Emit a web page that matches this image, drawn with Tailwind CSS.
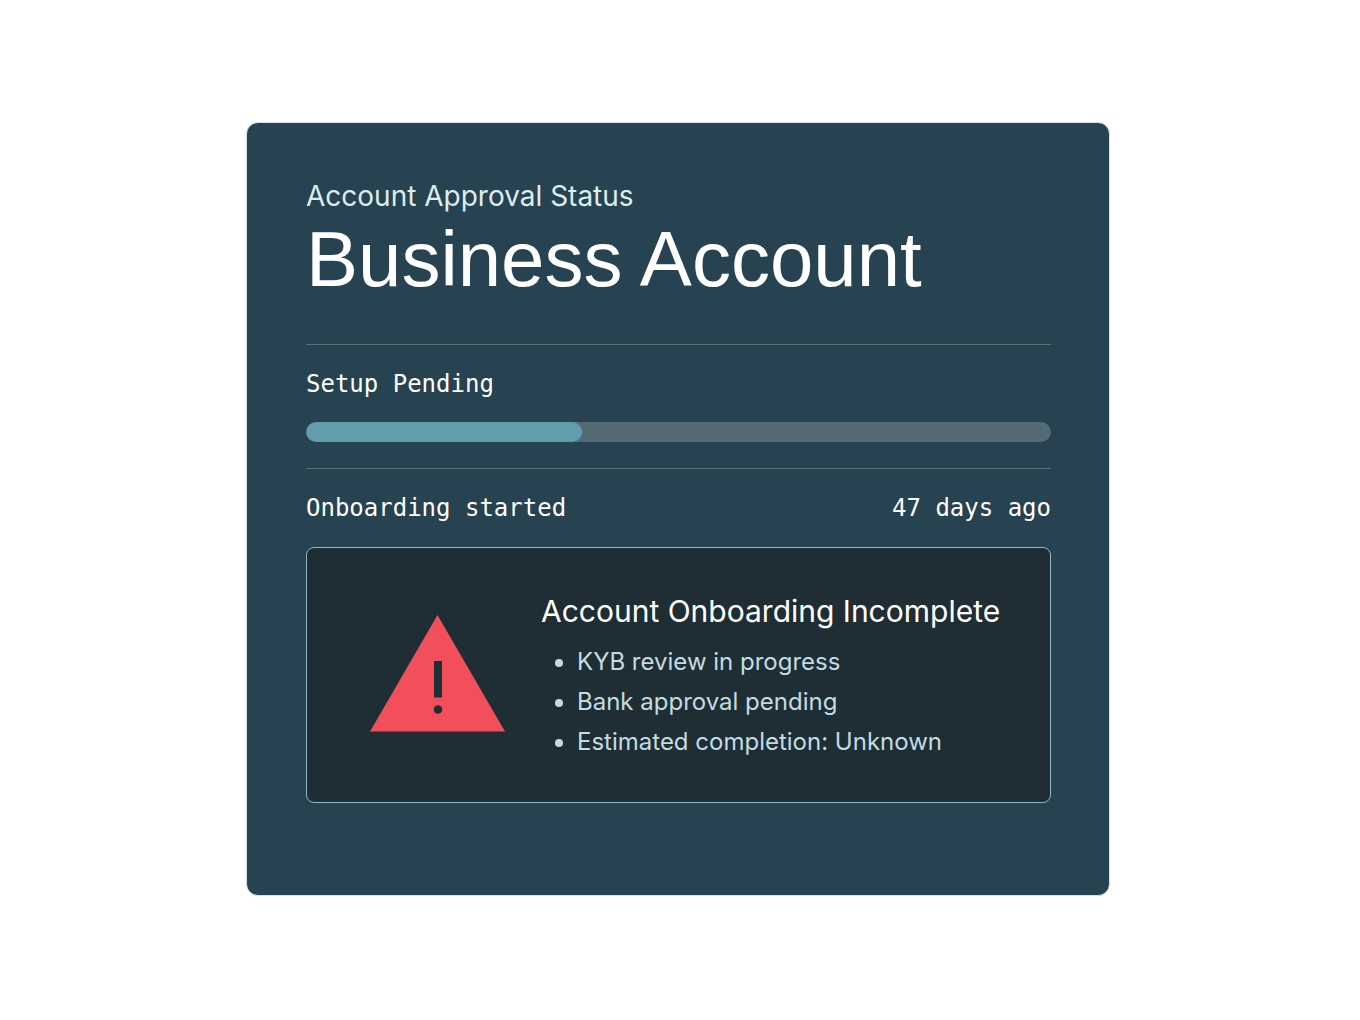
<!DOCTYPE html>
<html lang="en">
<head>
<meta charset="utf-8">
<meta name="viewport" content="width=device-width, initial-scale=1">
<title>Account Approval Status</title>
<script src="https://cdn.jsdelivr.net/npm/@tailwindcss/browser@4"></script>
</head>
<body class="bg-white font-['Inter',sans-serif]">
<main class="flex min-h-screen items-center justify-center pr-1 pb-[3px]">
  <section class="w-full max-w-[864px] rounded-xl border border-[#d5e3e7] bg-[#274250] pt-[55px] pr-[58px] pb-[92px] pl-[59px] text-white">
    <header>
      <p class="text-[28px] leading-9 text-[#dcecef]">Account Approval Status</p>
      <h1 class="font-['Liberation_Sans',Arial,sans-serif] text-[78px] leading-[90px]">Business Account</h1>
    </header>

    <div class="mt-10 border-t border-[#5a707a] pt-[23px] font-['DejaVu_Sans_Mono',monospace] text-2xl">
      <p id="setup" class="leading-8">Setup Pending</p>
      <div role="progressbar" aria-labelledby="setup" aria-valuenow="37" aria-valuemin="0" aria-valuemax="100" class="mt-[22px] h-5 overflow-hidden rounded-full bg-[#546a75]">
        <div class="h-full rounded-full bg-[#629dad]" style="width:37%"></div>
      </div>
    </div>

    <dl class="mt-[26px] flex justify-between border-t border-[#5a707a] pt-[23px] font-['DejaVu_Sans_Mono',monospace] text-2xl leading-8">
      <dt>Onboarding started</dt>
      <dd>47 days ago</dd>
    </dl>

    <div class="mt-[23px] flex items-start rounded-lg border border-[#8fbac5] bg-[#1f2d34] pt-[43px] pr-8 pb-10 pl-[63px]">
      <svg class="mt-6 h-[117px] w-[135px] shrink-0" viewBox="0 0 135 117" aria-hidden="true">
        <path d="M67.500 0 135 116.500H0Z" fill="#f24e5c"/>
        <path d="M64 46h8V82.500h-8Z" fill="#1f2d34"/>
        <circle cx="68" cy="94.500" r="4.300" fill="#1f2d34"/>
      </svg>
      <div class="ml-9">
        <h2 class="text-[30px] leading-10">Account Onboarding Incomplete</h2>
        <ul class="mt-[11px] list-disc pl-9 text-2xl leading-10 text-[#c3dce2]">
          <li>KYB review in progress</li>
          <li>Bank approval pending</li>
          <li>Estimated completion: Unknown</li>
        </ul>
      </div>
    </div>
  </section>
</main>
</body>
</html>
